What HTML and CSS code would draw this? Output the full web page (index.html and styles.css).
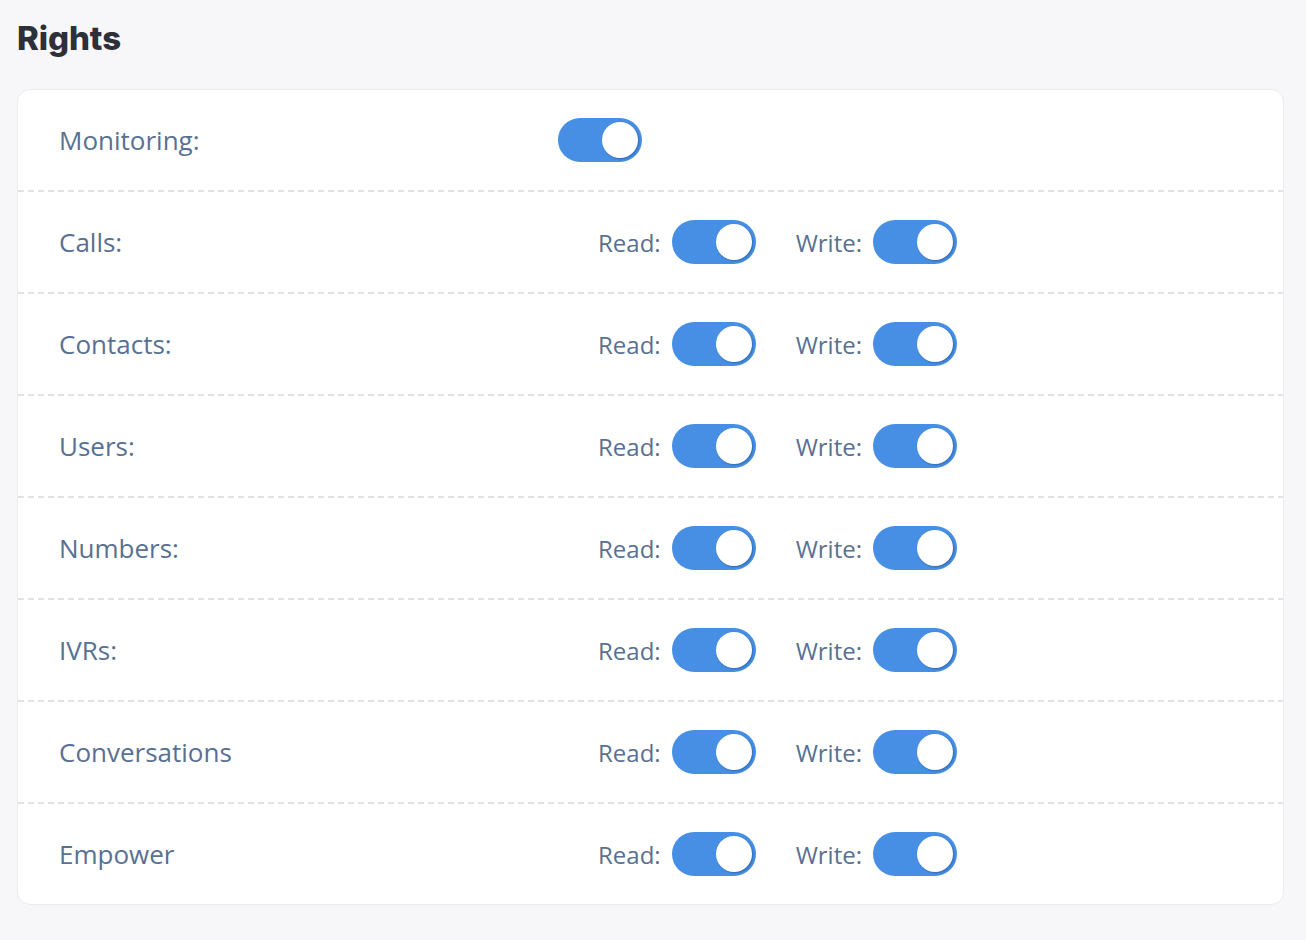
FILE: index.html
```html
<!DOCTYPE html>
<html lang="en">
<head>
<meta charset="utf-8">
<title>Rights</title>
<link rel="stylesheet" href="styles.css">
</head>
<body>
<div class="page">
  <h1 class="title">Rights</h1>
  <div class="card">
    <div class="row">
      <div class="label">Monitoring:</div>
      <div class="controls">
        <span class="toggle on"><span class="knob"></span></span>
      </div>
    </div>
    <div class="row">
      <div class="label">Calls:</div>
      <div class="controls">
        <div class="group"><span class="glabel">Read:</span><span class="toggle on"><span class="knob"></span></span></div>
        <div class="group"><span class="glabel">Write:</span><span class="toggle on"><span class="knob"></span></span></div>
      </div>
    </div>
    <div class="row">
      <div class="label">Contacts:</div>
      <div class="controls">
        <div class="group"><span class="glabel">Read:</span><span class="toggle on"><span class="knob"></span></span></div>
        <div class="group"><span class="glabel">Write:</span><span class="toggle on"><span class="knob"></span></span></div>
      </div>
    </div>
    <div class="row">
      <div class="label">Users:</div>
      <div class="controls">
        <div class="group"><span class="glabel">Read:</span><span class="toggle on"><span class="knob"></span></span></div>
        <div class="group"><span class="glabel">Write:</span><span class="toggle on"><span class="knob"></span></span></div>
      </div>
    </div>
    <div class="row">
      <div class="label">Numbers:</div>
      <div class="controls">
        <div class="group"><span class="glabel">Read:</span><span class="toggle on"><span class="knob"></span></span></div>
        <div class="group"><span class="glabel">Write:</span><span class="toggle on"><span class="knob"></span></span></div>
      </div>
    </div>
    <div class="row">
      <div class="label">IVRs:</div>
      <div class="controls">
        <div class="group"><span class="glabel">Read:</span><span class="toggle on"><span class="knob"></span></span></div>
        <div class="group"><span class="glabel">Write:</span><span class="toggle on"><span class="knob"></span></span></div>
      </div>
    </div>
    <div class="row">
      <div class="label">Conversations</div>
      <div class="controls">
        <div class="group"><span class="glabel">Read:</span><span class="toggle on"><span class="knob"></span></span></div>
        <div class="group"><span class="glabel">Write:</span><span class="toggle on"><span class="knob"></span></span></div>
      </div>
    </div>
    <div class="row last">
      <div class="label">Empower</div>
      <div class="controls">
        <div class="group"><span class="glabel">Read:</span><span class="toggle on"><span class="knob"></span></span></div>
        <div class="group"><span class="glabel">Write:</span><span class="toggle on"><span class="knob"></span></span></div>
      </div>
    </div>
  </div>
</div>
</body>
</html>
```

FILE: styles.css
```css
html, body {
  margin: 0;
  padding: 0;
  background: #f7f7f9;
}

.page {
  padding: 18px 22px 0 17px;
  font-family: "Open Sans", "Liberation Sans", sans-serif;
}

.title {
  margin: 0 0 31px 0;
  font-family: Inter, "Liberation Sans", sans-serif;
  font-weight: 800;
  font-size: 33px;
  line-height: 40px;
  color: #2d3039;
  letter-spacing: -0.1px;
}

.card {
  background: #ffffff;
  border: 1px solid #ececf0;
  border-radius: 13px;
  overflow: hidden;
}

.row {
  display: flex;
  align-items: center;
  height: 100px;
  padding-left: 41px;
  background-image: repeating-linear-gradient(to right, #e2e2e4 0, #e2e2e4 6px, transparent 6px, transparent 10px);
  background-size: 100% 2px;
  background-repeat: no-repeat;
  background-position: left bottom;
  padding-bottom: 2px;
}

.row.last {
  background-image: none;
  padding-bottom: 0;
}

.label {
  width: 499px;
  font-size: 26px;
  color: #587092;
}

.controls {
  display: flex;
  align-items: center;
}

.group {
  display: flex;
  align-items: center;
  gap: 11px;
  margin-left: 40px;
}

.glabel {
  font-size: 24px;
  color: #587092;
}

.toggle {
  position: relative;
  display: block;
  width: 84px;
  height: 44px;
  border-radius: 22px;
  background: #468fe4;
}

.knob {
  position: absolute;
  top: 4px;
  right: 4px;
  width: 36px;
  height: 36px;
  border-radius: 50%;
  background: #ffffff;
  box-shadow: 1px 1px 2px rgba(20, 60, 120, 0.45);
}
```
